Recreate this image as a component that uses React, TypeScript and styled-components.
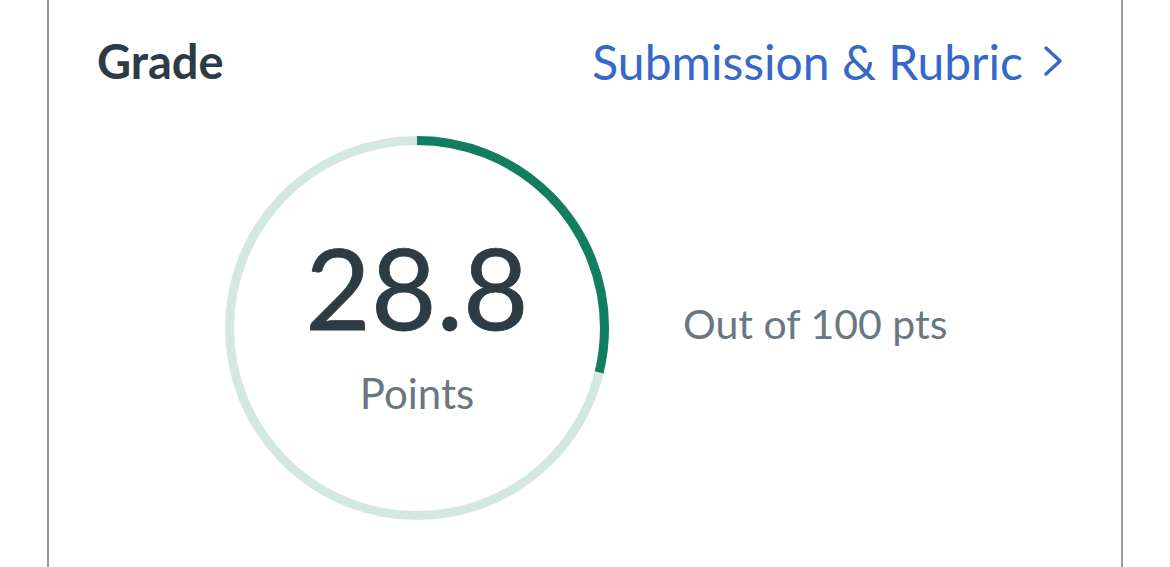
import React from "react";
import styled, { createGlobalStyle } from "styled-components";

const Global = createGlobalStyle`
  html, body { margin: 0; padding: 0; background: #ffffff; }
  body { font-family: Lato, "Open Sans", sans-serif; }
`;

const Page = styled.div`
  width: 1170px;
  height: 567px;
  overflow: hidden;
  background: #fff;
`;

const Card = styled.section`
  margin-left: 47px;
  width: 1076px;
  height: 567px;
  box-sizing: border-box;
  border-left: 2px solid #999999;
  border-right: 2px solid #999999;
  padding: 33px 58px 0 48px;
`;

const Header = styled.div`
  display: flex;
  align-items: center;
  justify-content: space-between;
  height: 56px;
`;

const Title = styled.h2`
  margin: 0;
  font-size: 47px;
  font-weight: 700;
  color: #2d3b45;
`;

const Link = styled.a`
  display: flex;
  align-items: center;
  gap: 20px;
  font-size: 48px;
  color: #3568c9;
  text-decoration: none;
`;

const Body = styled.div`
  display: flex;
  align-items: center;
  gap: 74px;
  margin-top: 47px;
  margin-left: 128px;
`;

const Gauge = styled.div`
  position: relative;
  width: 384px;
  height: 384px;
  flex: none;
`;

const GaugeText = styled.div`
  position: absolute;
  inset: 0;
  display: flex;
  flex-direction: column;
  align-items: center;
  justify-content: center;
  padding-bottom: 8px;
`;

const Score = styled.div`
  font-size: 113px;
  line-height: 1;
  color: #2d3b45;
  font-weight: 400;
  -webkit-text-stroke: 0.8px #2d3b45;
`;

const Unit = styled.div`
  margin-top: 25px;
  font-size: 42px;
  line-height: 1.2;
  color: #6b7780;
`;

const OutOf = styled.div`
  font-size: 41px;
  color: #6b7780;
  margin-top: -10px;
`;

const Chevron = () => (
  <svg width="20" height="32" viewBox="0 0 20 32" fill="none">
    <path d="M3 3 L17 16 L3 29" stroke="#3568c9" strokeWidth="3.5" strokeLinecap="round" strokeLinejoin="round" />
  </svg>
);

export default function App() {
  const score = 28.8;
  const total = 100;
  const r = 187.5;
  const c = 2 * Math.PI * r;
  const frac = score / total;
  return (
    <Page>
      <Global />
      <Card>
        <Header>
          <Title>Grade</Title>
          <Link href="#">
            Submission &amp; Rubric
            <Chevron />
          </Link>
        </Header>
        <Body>
          <Gauge>
            <svg width="384" height="384" viewBox="0 0 384 384">
              <circle cx="192" cy="192" r={r} fill="none" stroke="#d4e8e2" strokeWidth="9" />
              <circle
                cx="192"
                cy="192"
                r={r}
                fill="none"
                stroke="#127d5f"
                strokeWidth="9"
                strokeDasharray={`${c * frac} ${c}`}
                transform="rotate(-90 192 192)"
              />
            </svg>
            <GaugeText>
              <Score>{score}</Score>
              <Unit>Points</Unit>
            </GaugeText>
          </Gauge>
          <OutOf>Out of {total} pts</OutOf>
        </Body>
      </Card>
    </Page>
  );
}
